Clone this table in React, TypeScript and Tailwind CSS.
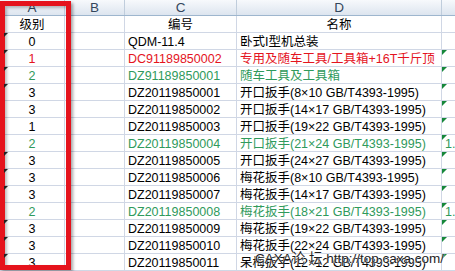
import React from 'react';

type Row = {
  lv: string;
  code: string;
  name: string;
  tone?: 'red' | 'green';
  head?: boolean;
  markA?: boolean;
  markE?: boolean;
  e?: string;
};

const rows: Row[] = [
  { lv: '级别', code: '编号', name: '名称', head: true },
  { lv: '0', code: 'QDM-11.4', name: '卧式I型机总装', markA: true },
  { lv: '1', code: 'DC91189850002', name: '专用及随车工具/工具箱+16T千斤顶', tone: 'red', markA: true, markE: true },
  { lv: '2', code: 'DZ91189850001', name: '随车工具及工具箱', tone: 'green', markA: true, markE: true },
  { lv: '3', code: 'DZ20119850001', name: '开口扳手(8×10 GB/T4393-1995)', markA: true, markE: true },
  { lv: '3', code: 'DZ20119850002', name: '开口扳手(14×17 GB/T4393-1995)', markE: true },
  { lv: '1', code: 'DZ20119850003', name: '开口扳手(19×22 GB/T4393-1995)', markE: true },
  { lv: '2', code: 'DZ20119850004', name: '开口扳手(21×24 GB/T4393-1995)', tone: 'green', markE: true, e: '1.5' },
  { lv: '3', code: 'DZ20119850005', name: '开口扳手(24×27 GB/T4393-1995)', markA: true, markE: true },
  { lv: '3', code: 'DZ20119850006', name: '梅花扳手(8×10 GB/T4393-1995)', markA: true, markE: true },
  { lv: '3', code: 'DZ20119850007', name: '梅花扳手(14×17 GB/T4393-1995)', markA: true, markE: true },
  { lv: '2', code: 'DZ20119850008', name: '梅花扳手(18×21 GB/T4393-1995)', tone: 'green', markE: true, e: '1.5' },
  { lv: '3', code: 'DZ20119850009', name: '梅花扳手(19×22 GB/T4393-1995)', markA: true, markE: true },
  { lv: '3', code: 'DZ20119850010', name: '梅花扳手(22×24 GB/T4393-1995)', markA: true, markE: true },
  { lv: '3', code: 'DZ20119850011', name: '呆梅扳手(12×12 GB/T4393-1995)', markA: true, markE: true },
];

const toneClass = (tone?: Row['tone']) =>
  tone === 'red' ? 'text-[#e4141e]' : tone === 'green' ? 'text-[#2f9a5c]' : 'text-black';

const cell = 'relative h-[17px] shrink-0 overflow-hidden whitespace-nowrap border-b border-r border-[#d0d7e5] pt-[1px] leading-[16px]';

const ColHead: React.FC<{ label: string; className: string }> = ({ label, className }) => (
  <div className={`flex h-[15px] shrink-0 items-center justify-center border-r border-[#c0cddc] text-[13.5px] leading-[15px] text-[#33465c] ${className}`}>
    {label}
  </div>
);

const App: React.FC = () => {
  return (
    <div className="relative h-[271px] w-[455px] overflow-hidden bg-white font-['Liberation_Sans','Noto_Sans_CJK_SC',sans-serif] text-[12.5px]">
      <div className="flex border-b border-[#9eb6ce] bg-gradient-to-b from-[#f7f9fc] to-[#dde5ef]">
        <ColHead label="A" className="w-[65px]" />
        <ColHead label="B" className="w-[60px]" />
        <ColHead label="C" className="w-[112px]" />
        <ColHead label="D" className="w-[205px]" />
        <ColHead label="" className="w-[40px]" />
      </div>

      {rows.map((r, i) => (
        <div key={i} className={`flex ${toneClass(r.tone)}`}>
          <div className={`${cell} w-[65px] text-center`}>
            {r.markA && (
              <span className="absolute left-[4px] top-0 z-20 border-r-[4px] border-t-[4px] border-r-transparent border-t-[#222]" />
            )}
            {r.lv}
          </div>
          <div className={`${cell} w-[60px]`} />
          <div className={`${cell} w-[112px] ${r.head ? 'text-center' : 'pl-[3px]'}`}>{r.code}</div>
          <div className={`${cell} w-[205px] ${r.head ? 'text-center' : 'pl-[3px]'}`}>{r.name}</div>
          <div className={`${cell} w-[40px] pl-[3px]`}>
            {r.markE && (
              <span className="absolute left-0 top-0 border-r-[5px] border-t-[5px] border-r-transparent border-t-[#16873a]" />
            )}
            {r.e}
          </div>
        </div>
      ))}

      {/* red highlight round column A */}
      <div className="pointer-events-none absolute left-0 top-[1px] z-10 h-[269px] w-[71px] border-[5px] border-[#e5131c] shadow-[2px_2px_3px_rgba(0,0,0,0.35),inset_2px_2px_3px_rgba(0,0,0,0.25)]" />

      {/* forum watermark */}
      <div className="pointer-events-none absolute left-[255px] top-[251px] z-10 whitespace-nowrap text-[13.5px] leading-[16px] text-[#1e1e1e] [text-shadow:0_0_1px_#fff,0_0_2px_#fff]">
        CAXA论 坛 http://top.caxa.com/
      </div>
    </div>
  );
};

export default App;
